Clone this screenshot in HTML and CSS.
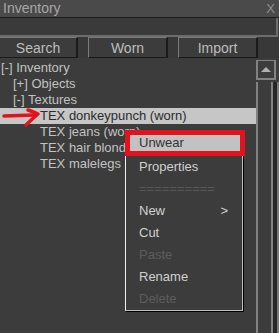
FILE: index.html
```html
<!DOCTYPE html>
<html lang="en">
<head>
  <meta charset="UTF-8">
  <title>Inventory</title>
  <link rel="stylesheet" href="styles.css">
</head>
<body>
  <div class="window">
    <div class="titlebar">
      <span>Inventory</span>
      <span class="close">X</span>
    </div>
    <div class="field"></div>
    <div class="toolbar">
      <button class="tb-btn btn-search">Search</button>
      <button class="tb-btn btn-worn">Worn</button>
      <button class="tb-btn btn-import">Import</button>
    </div>
    <div class="main">
      <div class="tree">
        <div class="row lvl0">[-] Inventory</div>
        <div class="row lvl1">[+] Objects</div>
        <div class="row lvl1">[-] Textures</div>
        <div class="row lvl2 selected">TEX donkeypunch (worn)</div>
        <div class="row lvl2">TEX jeans (worn)</div>
        <div class="row lvl2">TEX hair blond (worn)</div>
        <div class="row lvl2">TEX malelegs (worn)</div>
      </div>
      <div class="scrollbar">
        <div class="sb-up"><span class="sb-arrow"></span></div>
        <div class="sb-track"></div>
      </div>
    </div>
  </div>

  <!-- annotation arrow -->
  <svg class="pointer" width="42" height="24" viewBox="0 0 42 24">
    <path d="M4 10 L34 9" stroke="#e3121c" stroke-width="3.5" fill="none" stroke-linecap="round"/>
    <path d="M28 4 Q34 6 38 8 Q32 13 26 19" stroke="#e3121c" stroke-width="3.5" fill="none" stroke-linecap="round" stroke-linejoin="round"/>
  </svg>

  <!-- context menu -->
  <div class="menu">
    <div class="menu-item hot">Unwear</div>
    <div class="menu-item">Properties</div>
    <div class="menu-item sep">==========</div>
    <div class="menu-item sub"><span>New</span><span>&gt;</span></div>
    <div class="menu-item">Cut</div>
    <div class="menu-item off">Paste</div>
    <div class="menu-item">Rename</div>
    <div class="menu-item off">Delete</div>
  </div>
</body>
</html>
```

FILE: styles.css
```css
body { margin: 0; width: 279px; height: 333px; overflow: hidden; background: #3c3c3c; font-family: "Liberation Sans", Arial, sans-serif; font-size: 13px; color: #c2c2c2; position: relative; }
.window { display: flex; flex-direction: column; height: 333px; }
.titlebar { height: 17px; line-height: 17px; background: #4a4a4a; color: #a6a6a6; display: flex; justify-content: space-between; padding: 0 4px 0 3px; border-bottom: 1px solid #1c1c1c; font-size: 14px; }
.close { color: #8e8e8e; font-size: 13px; }
.field { height: 17px; background: #3a3a3a; border-bottom: 2px solid #6c6c6c; border-right: 2px solid #6c6c6c; margin-right: 1px; }
.toolbar { height: 21px; display: flex; background: #383838; }
.tb-btn { height: 21px; box-sizing: border-box; background: #3c3c3c; color: #bcbcbc; font-family: inherit; font-size: 14px; border: none; border-top: 1px solid #7a7a7a; border-left: 1px solid #7a7a7a; border-right: 2px solid #1a1a1a; border-bottom: 1px solid #1a1a1a; padding: 0; }
.btn-search { width: 78px; border-left: none; margin-right: 10px; }
.btn-worn { width: 80px; margin-right: 10px; }
.btn-import { width: 80px; }
.main { flex: 1; display: flex; padding-top: 2px; }
.tree { width: 256px; }
.row { height: 16px; line-height: 16px; white-space: nowrap; color: #c2c2c2; }
.lvl0 { padding-left: 1px; }
.lvl1 { padding-left: 13px; }
.lvl2 { padding-left: 40px; }
.row.selected { background: #c6c6c6; color: #2c2c2c; }
.scrollbar { width: 23px; display: flex; flex-direction: column; }
.sb-up { width: 20px; height: 20px; box-sizing: border-box; border: 2px solid #828282; border-top-width: 1px; display: flex; align-items: center; justify-content: center; }
.sb-arrow { width: 0; height: 0; border-left: 5px solid transparent; border-right: 5px solid transparent; border-bottom: 5px solid #b0b0b0; }
.sb-track { flex: 1; margin-top: 2px; border-left: 2px solid #828282; border-right: 6px solid #262626; box-shadow: inset -2px 0 0 #828282; position: relative; }
.sb-track::after { content: ""; position: absolute; right: -6px; top: 0; bottom: 0; width: 2px; background: #7a7a7a; }
.pointer { position: absolute; left: 0; top: 106px; }
.menu { position: absolute; left: 125px; top: 130px; width: 116px; background: #3c3c3c; border-left: 1px solid #f0f0f0; border-right: 1px solid #bcbcbc; border-bottom: 1px solid #bcbcbc; box-shadow: 1px 1px 0 #000; }
.menu-item { height: 22px; line-height: 22px; padding-left: 13px; padding-right: 14px; color: #d0d0d0; display: flex; justify-content: space-between; }
.menu-item.hot { height: 26px; line-height: 16px; box-sizing: border-box; margin: 0 -3px 0 -1px; border: 5px solid #e3121c; background: #c2c2c2; color: #333; padding-left: 9px; }
.menu-item.sep { color: #585858; }
.menu-item.off { color: #5c5c5c; }
```
